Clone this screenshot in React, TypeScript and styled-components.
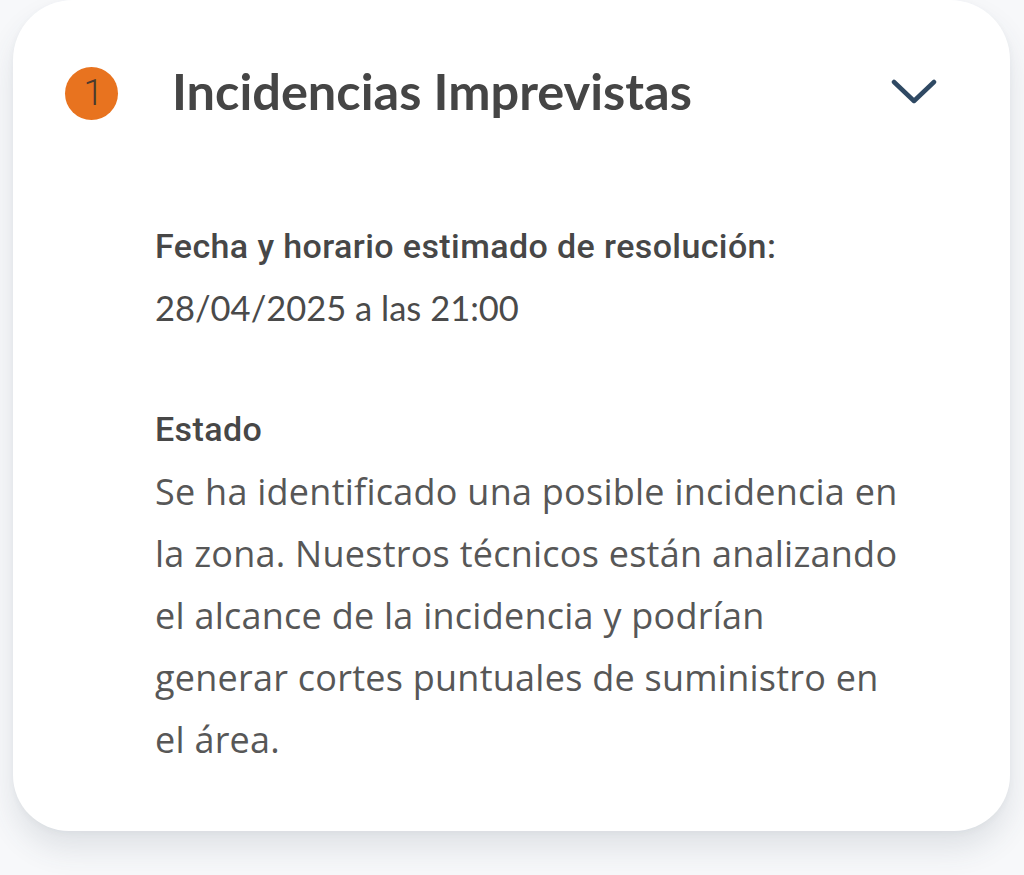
import React from "react";
import styled, { createGlobalStyle } from "styled-components";

const Global = createGlobalStyle`
  html, body { margin: 0; padding: 0; background: #f7f8fa; }
  #root { width: 1024px; height: 875px; overflow: hidden; }
`;

const Page = styled.div`
  width: 1024px;
  height: 875px;
  padding: 0 14px 0 13px;
  box-sizing: border-box;
  background: #f7f8fa;
`;

const Card = styled.section`
  background: #ffffff;
  border-radius: 60px 60px 56px 56px;
  height: 831px;
  box-sizing: border-box;
  box-shadow: 0 18px 30px rgba(60, 70, 90, 0.12), 0 2px 6px rgba(60, 70, 90, 0.05);
  padding: 66px 73px 0 52px;
`;

const Header = styled.div`
  display: flex;
  align-items: center;
  height: 54px;
`;

const Badge = styled.div`
  width: 53px;
  height: 53px;
  border-radius: 50%;
  background: #e8731f;
  color: #4a3a2e;
  display: flex;
  align-items: center;
  justify-content: center;
  padding-left: 4px;
  box-sizing: border-box;
  font-family: "Roboto", sans-serif;
  font-size: 36px;
  font-weight: 300;
  flex: none;
`;

const Title = styled.h2`
  margin: 0 0 0 54px;
  padding-bottom: 4px;
  flex: 1;
  font-family: "Lato", sans-serif;
  font-weight: 700;
  font-size: 50.5px;
  line-height: 54px;
  color: #454545;
`;

const Chevron = styled.svg`
  width: 46px;
  height: 28px;
  flex: none;
  margin-top: -2px;
`;

const Body = styled.div`
  padding: 106px 0 0 90px;
  display: flex;
  flex-direction: column;
`;

const Label = styled.div`
  font-family: "Roboto", sans-serif;
  font-weight: 500;
  font-size: 34px;
  letter-spacing: 0.4px;
  color: #474747;
  line-height: 40px;
`;

const Value = styled.div`
  font-family: "Lato", sans-serif;
  font-size: 34.5px;
  color: #4a4a4a;
  line-height: 40px;
  margin-top: 22px;
  margin-bottom: 81px;
`;

const Paragraph = styled.p`
  margin: 12px 0 0;
  font-family: "Open Sans", sans-serif;
  font-size: 36px;
  letter-spacing: 0.25px;
  line-height: 62px;
  color: #575757;
  width: 780px;
`;

export default function App() {
  return (
    <>
      <Global />
      <Page>
        <Card>
          <Header>
            <Badge>1</Badge>
            <Title>Incidencias Imprevistas</Title>
            <Chevron viewBox="0 0 46 28">
              <path d="M3 4 L23 23 L43 4" fill="none" stroke="#2f4963" strokeWidth="4.5" strokeLinecap="round" strokeLinejoin="round" />
            </Chevron>
          </Header>
          <Body>
            <Label>Fecha y horario estimado de resolución:</Label>
            <Value>28/04/2025 a las 21:00</Value>
            <Label>Estado</Label>
            <Paragraph>
              Se ha identificado una posible incidencia en
              <br />
              la zona. Nuestros técnicos están analizando
              <br />
              el alcance de la incidencia y podrían
              <br />
              generar cortes puntuales de suministro en
              <br />
              el área.
            </Paragraph>
          </Body>
        </Card>
      </Page>
    </>
  );
}
